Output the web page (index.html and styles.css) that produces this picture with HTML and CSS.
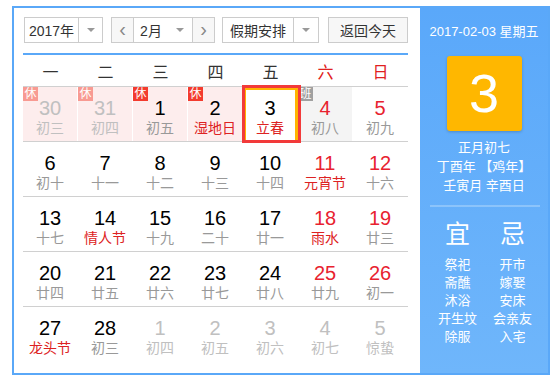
FILE: index.html
```html
<!DOCTYPE html>
<html>
<head>
  <title>万年历</title>
  <link rel="stylesheet" href="styles.css">
</head>
<body>
  <div class="calendar">
    <div class="main">
      <div class="toolbar">
        <div class="select year-select">
          <span class="select-text">2017年</span>
          <span class="select-arrow"></span>
        </div>
        <div class="month-group">
          <span class="nav-btn">&lsaquo;</span>
          <div class="month-select">
            <span class="select-text">2月</span>
            <span class="select-arrow"></span>
          </div>
          <span class="nav-btn">&rsaquo;</span>
        </div>
        <div class="select holiday-select">
          <span class="select-text">假期安排</span>
          <span class="select-arrow"></span>
        </div>
        <button class="today-btn">返回今天</button>
      </div>

      <div class="weekdays">
        <span>一</span><span>二</span><span>三</span><span>四</span><span>五</span>
        <span class="red">六</span><span class="red">日</span>
      </div>

      <div class="days">
        <div class="row">
          <div class="day other holiday"><i class="badge">休</i><b>30</b><em>初三</em></div>
          <div class="day other holiday"><i class="badge">休</i><b>31</b><em>初四</em></div>
          <div class="day holiday"><i class="badge">休</i><b>1</b><em>初五</em></div>
          <div class="day holiday fest"><i class="badge">休</i><b>2</b><em>湿地日</em></div>
          <div class="day fest selected"><b>3</b><em>立春</em></div>
          <div class="day work weekend"><i class="badge">班</i><b>4</b><em>初八</em></div>
          <div class="day weekend"><b>5</b><em>初九</em></div>
        </div>
        <div class="row">
          <div class="day"><b>6</b><em>初十</em></div>
          <div class="day"><b>7</b><em>十一</em></div>
          <div class="day"><b>8</b><em>十二</em></div>
          <div class="day"><b>9</b><em>十三</em></div>
          <div class="day"><b>10</b><em>十四</em></div>
          <div class="day weekend fest"><b>11</b><em>元宵节</em></div>
          <div class="day weekend"><b>12</b><em>十六</em></div>
        </div>
        <div class="row">
          <div class="day"><b>13</b><em>十七</em></div>
          <div class="day fest"><b>14</b><em>情人节</em></div>
          <div class="day"><b>15</b><em>十九</em></div>
          <div class="day"><b>16</b><em>二十</em></div>
          <div class="day"><b>17</b><em>廿一</em></div>
          <div class="day weekend fest"><b>18</b><em>雨水</em></div>
          <div class="day weekend"><b>19</b><em>廿三</em></div>
        </div>
        <div class="row">
          <div class="day"><b>20</b><em>廿四</em></div>
          <div class="day"><b>21</b><em>廿五</em></div>
          <div class="day"><b>22</b><em>廿六</em></div>
          <div class="day"><b>23</b><em>廿七</em></div>
          <div class="day"><b>24</b><em>廿八</em></div>
          <div class="day weekend"><b>25</b><em>廿九</em></div>
          <div class="day weekend"><b>26</b><em>初一</em></div>
        </div>
        <div class="row">
          <div class="day fest"><b>27</b><em>龙头节</em></div>
          <div class="day"><b>28</b><em>初三</em></div>
          <div class="day other"><b>1</b><em>初四</em></div>
          <div class="day other"><b>2</b><em>初五</em></div>
          <div class="day other"><b>3</b><em>初六</em></div>
          <div class="day other"><b>4</b><em>初七</em></div>
          <div class="day other"><b>5</b><em>惊蛰</em></div>
        </div>
      </div>
    </div>

    <div class="side">
      <div class="side-date">2017-02-03 星期五</div>
      <div class="big-day">3</div>
      <div class="lunar">
        <div>正月初七</div>
        <div>丁酉年 【鸡年】</div>
        <div>壬寅月 辛酉日</div>
      </div>
      <div class="almanac">
        <div class="almanac-col">
          <h3>宜</h3>
          <span>祭祀</span>
          <span>斋醮</span>
          <span>沐浴</span>
          <span>开生坟</span>
          <span>除服</span>
        </div>
        <div class="almanac-col">
          <h3>忌</h3>
          <span>开市</span>
          <span>嫁娶</span>
          <span>安床</span>
          <span>会亲友</span>
          <span>入宅</span>
        </div>
      </div>
    </div>
  </div>
</body>
</html>
```

FILE: styles.css
```css
body {
  margin: 0;
  padding: 6px 0 0 12px;
  background-color: #fff;
  font-family: "Liberation Sans", Arial, "Noto Sans CJK SC", sans-serif;
  color: #000;
}

.calendar {
  display: flex;
  width: 534px;
  height: 365px;
  border: 2px solid #5aa8f8;
}

.main {
  width: 385px;
  padding: 9px 12px 0 9px;
  background-color: #fff;
}

/* toolbar */

.toolbar {
  display: flex;
  height: 26px;
  padding-left: 1px;
}

.select,
.month-group {
  display: flex;
  height: 24px;
  border: 1px solid #ccc;
  font-size: 14px;
  color: #333;
}

.select-text {
  display: flex;
  align-items: center;
  justify-content: center;
}

.select-arrow {
  position: relative;
  border-left: 1px solid #ccc;
}

.select-arrow::after {
  content: "";
  position: absolute;
  left: 50%;
  top: 10px;
  margin-left: -4px;
  border-left: 4px solid transparent;
  border-right: 4px solid transparent;
  border-top: 4px solid #999;
}

.year-select .select-text {
  width: 53px;
}

.year-select .select-arrow {
  width: 23px;
}

.month-group {
  margin-left: 8px;
}

.nav-btn {
  display: flex;
  align-items: center;
  justify-content: center;
  width: 21px;
  background-color: #f7f7f7;
  color: #888;
  font-size: 20px;
  line-height: 1;
  padding-bottom: 3px;
  box-sizing: border-box;
}

.month-select {
  display: flex;
  width: 58px;
  border-left: 1px solid #ccc;
  border-right: 1px solid #ccc;
}

.month-select .select-text {
  width: 34px;
}

.month-select .select-arrow {
  width: 24px;
  border-left: none;
}

.holiday-select {
  margin-left: 7px;
}

.holiday-select .select-text {
  width: 70px;
}

.holiday-select .select-arrow {
  width: 24px;
}

.today-btn {
  margin-left: 9px;
  width: 81px;
  height: 26px;
  padding: 0;
  border: 1px solid #ccc;
  background-color: #f7f7f7;
  font-family: inherit;
  font-size: 14px;
  color: #333;
}

/* weekdays */

.weekdays {
  display: grid;
  grid-template-columns: repeat(7, 55px);
  margin-top: 10px;
  border-top: 2px solid #5aa8f8;
  height: 31px;
  align-items: center;
  font-size: 16px;
  text-align: center;
  color: #333;
}

.weekdays .red {
  color: #e02020;
}

/* days */

.row {
  display: grid;
  grid-template-columns: repeat(7, 54px);
  column-gap: 1px;
  border-top: 1px solid #d0d0d0;
  height: 54px;
}

.day {
  position: relative;
  padding-top: 10px;
  text-align: center;
}

.day b {
  display: block;
  font-weight: normal;
  font-size: 20px;
  line-height: 22px;
}

.day em {
  display: block;
  font-style: normal;
  font-size: 14px;
  line-height: 18px;
  color: #999;
}

.day.weekend b {
  color: #e8222f;
}

.day.fest em {
  color: #dd2222;
}

.day.other b,
.day.other em {
  color: #c0c0c0;
}

.day.holiday {
  background-color: #fdeded;
}

.day.work {
  background-color: #f4f4f4;
}

.badge {
  position: absolute;
  left: 0;
  top: 0;
  width: 15px;
  height: 14px;
  font-style: normal;
  font-size: 12px;
  line-height: 14px;
  color: #fff;
  background-color: #f33b2e;
}

.day.other .badge {
  background-color: #f89a92;
}

.day.work .badge {
  background-color: #a0a0a0;
}

.day.selected::after {
  content: "";
  position: absolute;
  z-index: 1;
  left: -1px;
  top: -2px;
  right: -4px;
  bottom: -2px;
  border: 3px solid #f23a3a;
  box-shadow: inset 1px 2px 0 #ffb400, inset -3px 0 0 #ffb400;
}

/* side panel */

.side {
  width: 128px;
  padding-top: 16px;
  background: linear-gradient(#5aa8fa, #6fb6fb);
  color: #fff;
  text-align: center;
}

.side-date {
  font-size: 13px;
  line-height: 16px;
}

.big-day {
  width: 75px;
  height: 75px;
  margin: 16px auto 0;
  border-radius: 3px;
  background-color: #ffb700;
  box-shadow: 0 1px 3px rgba(0, 0, 0, 0.2);
  font-size: 54px;
  line-height: 75px;
}

.lunar {
  margin-top: 7px;
  font-size: 13px;
  line-height: 19px;
}

.almanac {
  display: flex;
  justify-content: center;
  margin: 10px 8px 0 10px;
  padding-top: 12px;
  border-top: 2px solid #8cc4fb;
}

.almanac-col {
  display: flex;
  flex-direction: column;
  width: 55px;
  font-size: 13px;
  line-height: 18px;
}

.almanac-col h3 {
  margin: 0 0 7px;
  font-size: 25px;
  font-weight: normal;
  line-height: 30px;
}
```
